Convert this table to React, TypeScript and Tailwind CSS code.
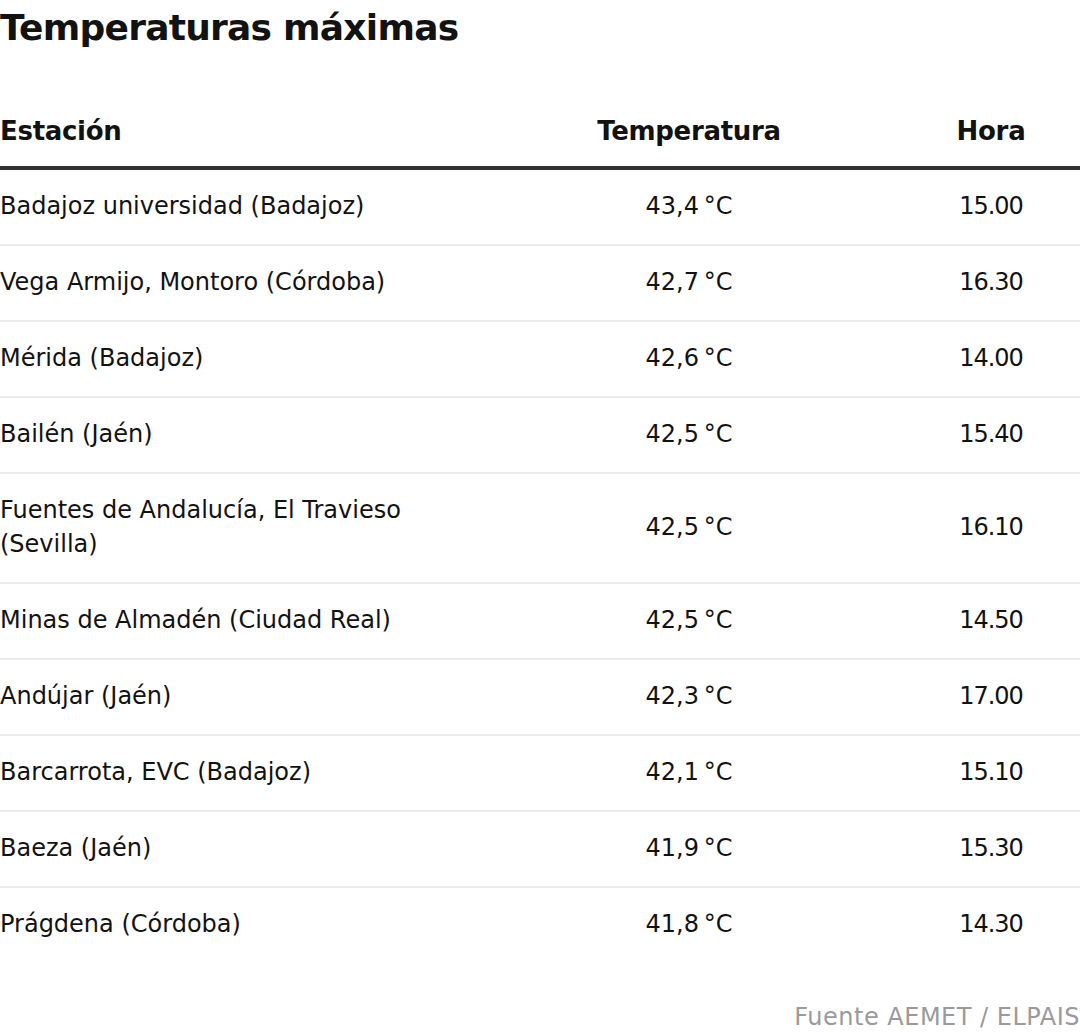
import React from "react";

const rows: [string, string, string][] = [
  ["Badajoz universidad (Badajoz)", "43,4\u2009°C", "15.00"],
  ["Vega Armijo, Montoro (Córdoba)", "42,7\u2009°C", "16.30"],
  ["Mérida (Badajoz)", "42,6\u2009°C", "14.00"],
  ["Bailén (Jaén)", "42,5\u2009°C", "15.40"],
  ["Fuentes de Andalucía, El Travieso (Sevilla)", "42,5\u2009°C", "16.10"],
  ["Minas de Almadén (Ciudad Real)", "42,5\u2009°C", "14.50"],
  ["Andújar (Jaén)", "42,3\u2009°C", "17.00"],
  ["Barcarrota, EVC (Badajoz)", "42,1\u2009°C", "15.10"],
  ["Baeza (Jaén)", "41,9\u2009°C", "15.30"],
  ["Prágdena (Córdoba)", "41,8\u2009°C", "14.30"],
];

export default function App() {
  return (
    <div
      className="w-[1080px] h-[1036px] bg-white text-[#121212] overflow-hidden"
      style={{ fontFamily: '"DejaVu Sans", "Liberation Sans", Arial, sans-serif' }}
    >
      <h1 className="h-[56px] leading-[56px] text-[36px] font-bold tracking-[-0.75px]">
        Temperaturas máximas
      </h1>
      <div className="mt-[40px] flex h-[74px] items-center border-b-4 border-[#333] text-[26px] font-bold tracking-[-0.3px]">
        <div className="w-[476px]">Estación</div>
        <div className="w-[426px] text-center">Temperatura</div>
        <div className="flex-1 text-center">Hora</div>
      </div>
      {rows.map((r, i) => (
        <div
          key={i}
          className={`flex items-center pt-[19px] pb-[21px] text-[24px] leading-[34px] ${
            i < rows.length - 1 ? "border-b-2 border-[#ececec]" : ""
          }`}
        >
          <div className="w-[476px] pr-[60px]">{r[0]}</div>
          <div className="w-[426px] text-center">{r[1]}</div>
          <div className="flex-1 text-center tracking-[-1px]">{r[2]}</div>
        </div>
      ))}
      <div className="mt-[38px] text-right text-[24px] leading-[34px] tracking-[0.5px] text-[#9a9a9a]">
        Fuente AEMET / ELPAIS
      </div>
    </div>
  );
}
